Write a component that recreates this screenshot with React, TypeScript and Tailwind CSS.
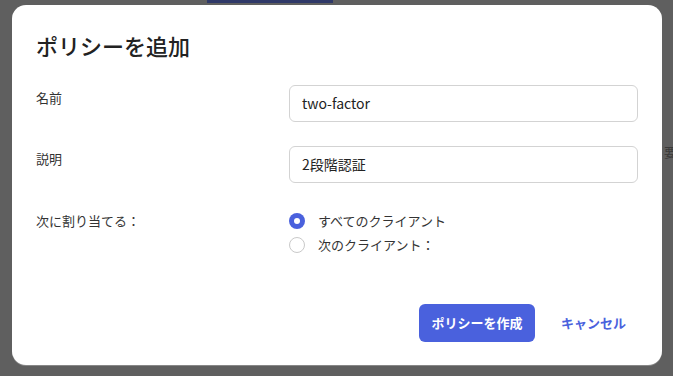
import { useState } from "react";

const font = { fontFamily: '"Noto Sans CJK JP", "Noto Sans", sans-serif' };

function Radio({ checked, label, onSelect }: { checked: boolean; label: string; onSelect: () => void }) {
  return (
    <label className="flex h-6 cursor-pointer items-center gap-[13px]" onClick={onSelect}>
      <span
        className={`flex h-4 w-4 shrink-0 items-center justify-center rounded-full ${
          checked ? "bg-[#4a61dd]" : "border-[1.5px] border-[#c9c9c9] bg-white"
        }`}
      >
        {checked ? <span className="h-[6px] w-[6px] rounded-full bg-white" /> : null}
      </span>
      <span className="text-[13px] leading-5 text-[#333]">{label}</span>
    </label>
  );
}

export default function App() {
  const [target, setTarget] = useState<"all" | "some">("all");

  return (
    <div className="relative h-[376px] w-[673px] overflow-hidden bg-[#5f5f5f]" style={font}>
      {/* page behind the overlay */}
      <div className="ml-[207px] h-[3px] w-[126px] bg-[#2f3968]" />
      <span className="absolute left-[664px] top-[142px] text-[13px] leading-5 text-[#3a3a3a]">要</span>

      <div className="absolute left-[12px] top-[5px] flex h-[360px] w-[650px] flex-col rounded-[14px] bg-white pl-6 pr-6 pt-[26px] shadow-[0_1px_0_rgba(255,255,255,0.25)]">
        <h1 className="text-[22px] font-medium leading-7 text-[#222]">ポリシーを追加</h1>

        <div className="mt-[26px] grid grid-cols-[253px_1fr] gap-y-6">
          <div className="pt-[3px] text-[13px] leading-5 text-[#333]">名前</div>
          <div className="flex h-[37px] items-center rounded-md border border-[#d3d3d3] px-3 text-[14px] text-[#222]">
            two-factor
          </div>

          <div className="pt-[3px] text-[13px] leading-5 text-[#333]">説明</div>
          <div className="flex h-[37px] items-center rounded-md border border-[#d3d3d3] px-3 text-[14px] text-[#222]">
            2段階認証
          </div>

          <div className="mt-[2px] pt-[2px] text-[13px] leading-5 text-[#333]">次に割り当てる：</div>
          <div className="mt-[2px] flex flex-col">
            <Radio checked={target === "all"} label="すべてのクライアント" onSelect={() => setTarget("all")} />
            <Radio checked={target === "some"} label="次のクライアント：" onSelect={() => setTarget("some")} />
          </div>
        </div>

        <div className="mt-auto mb-[23px] mr-[-4px] flex items-center justify-end">
          <button className="h-[38px] w-[116px] rounded-md bg-[#4a61dd] text-[13px] font-bold text-white">
            ポリシーを作成
          </button>
          <button className="ml-[10px] h-[38px] px-4 text-[13px] font-bold text-[#4a61dd]">キャンセル</button>
        </div>
      </div>
    </div>
  );
}
